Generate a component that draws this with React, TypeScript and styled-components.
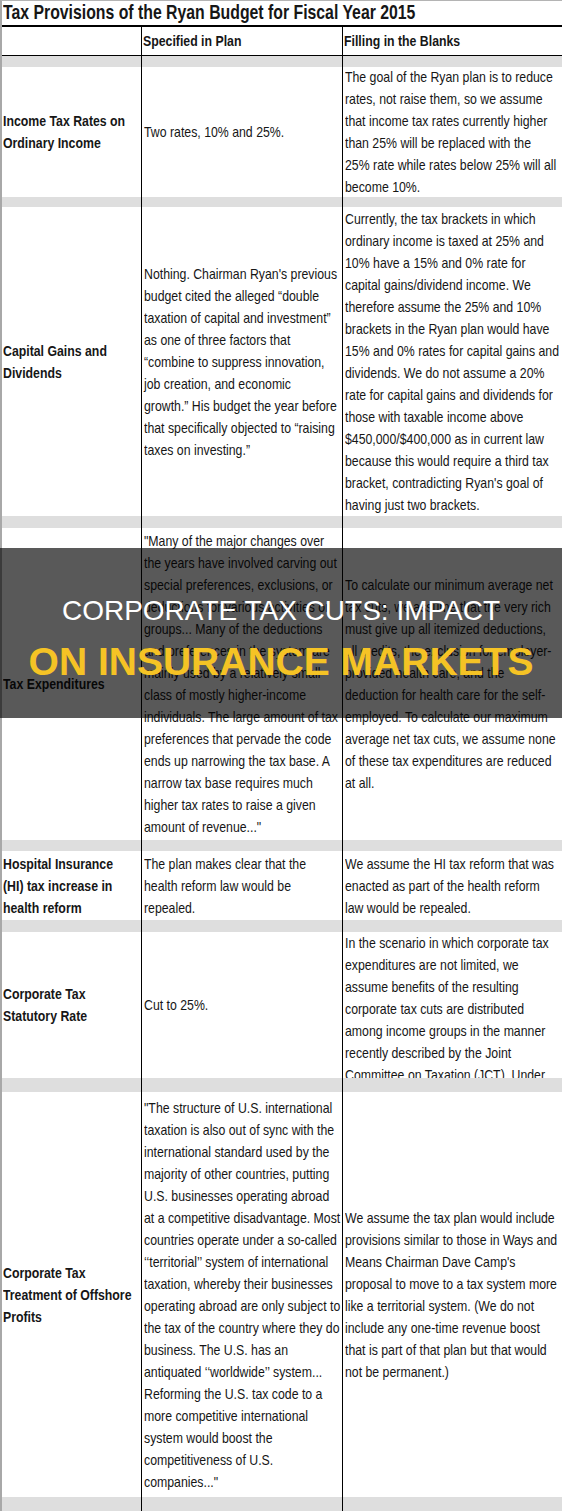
import { FC } from 'react';
import styled, { createGlobalStyle } from 'styled-components';

const GlobalStyle = createGlobalStyle`
  html, body {
    margin: 0;
    padding: 0;
    background: #ffffff;
  }
`;

const Page = styled.div`
  position: relative;
  width: 562px;
  height: 1511px;
  overflow: hidden;
  background: #ffffff;
`;

// the sheet is set in a narrow face; no narrow font is installed,
// so the glyphs are squeezed to the width of Arial Narrow
const NARROW = 0.82;

const Sheet = styled.div`
  display: flex;
  flex-direction: column;
  border-top: 1px solid #b4b4b4;
  border-left: 2px solid #a8a8a8;
  font-family: "Liberation Sans", Arial, sans-serif;
  color: #161616;
`;

const Title = styled.div`
  height: 24px;
  padding-left: 1px;
  font-size: 19.3px;
  font-weight: 700;
  line-height: 24px;
  border-bottom: 2px solid #000000;
`;

const Row = styled.div<{ $h: number; $gray?: boolean; $ruled?: boolean }>`
  display: grid;
  grid-template-columns: 139px 201px 1fr;
  height: ${p => p.$h}px;
  background: ${p => (p.$gray ? '#dedede' : '#ffffff')};
  border-bottom: ${p => (p.$ruled ? '1px solid #000000' : 'none')};
`;

const Cell = styled.div<{ $line?: boolean; $top?: boolean; $bold?: boolean }>`
  display: flex;
  flex-direction: column;
  justify-content: ${p => (p.$top ? 'flex-start' : 'center')};
  overflow: hidden;
  padding-left: ${p => (p.$bold ? 1 : 2)}px;
  border-left: ${p => (p.$line ? '1px solid #000000' : 'none')};
  font-size: 15px;
  font-weight: ${p => (p.$bold ? 700 : 400)};
  line-height: 22px;
`;

const Line = styled.span`
  display: block;
  white-space: nowrap;
  transform: scaleX(${NARROW});
  transform-origin: left center;
`;

const Banner = styled.div`
  position: absolute;
  top: 548px;
  left: 0;
  right: 0;
  height: 170px;
  box-sizing: border-box;
  padding-top: 46px;
  display: flex;
  flex-direction: column;
  align-items: center;
  gap: 11px;
  background: rgba(0, 0, 0, 0.65);
  font-family: "Liberation Sans", Arial, sans-serif;
  text-transform: uppercase;
`;

const BannerTop = styled.div`
  color: #ffffff;
  font-size: 28px;
  line-height: 34px;
  font-weight: 400;
  white-space: nowrap;
`;

const BannerBottom = styled.div`
  color: #f5c325;
  font-size: 39px;
  line-height: 46px;
  font-weight: 700;
  white-space: nowrap;
`;

type Entry = {
  h: number;
  label: string[];
  plan: string[];
  blanks: string[];
  blanksTop?: boolean;
};

const entries: Entry[] = [
  {
    h: 130,
    label: ['Income Tax Rates on', 'Ordinary Income'],
    plan: ['Two rates, 10% and 25%.'],
    blanks: [
      'The goal of the Ryan plan is to reduce',
      'rates, not raise them, so we assume',
      'that income tax rates currently higher',
      'than 25% will be replaced with the',
      '25% rate while rates below 25% will all',
      'become 10%.',
    ],
  },
  {
    h: 309,
    label: ['Capital Gains and', 'Dividends'],
    plan: [
      "Nothing. Chairman Ryan's previous",
      'budget cited the alleged “double',
      'taxation of capital and investment”',
      'as one of three factors that',
      '“combine to suppress innovation,',
      'job creation, and economic',
      'growth.” His budget the year before',
      'that specifically objected to “raising',
      'taxes on investing.”',
    ],
    blanks: [
      'Currently, the tax brackets in which',
      'ordinary income is taxed at 25% and',
      '10% have a 15% and 0% rate for',
      'capital gains/dividend income. We',
      'therefore assume the 25% and 10%',
      'brackets in the Ryan plan would have',
      '15% and 0% rates for capital gains and',
      'dividends. We do not assume a 20%',
      'rate for capital gains and dividends for',
      'those with taxable income above',
      '$450,000/$400,000 as in current law',
      'because this would require a third tax',
      "bracket, contradicting Ryan's goal of",
      'having just two brackets.',
    ],
  },
  {
    h: 312,
    label: ['Tax Expenditures'],
    plan: [
      '"Many of the major changes over',
      'the years have involved carving out',
      'special preferences, exclusions, or',
      'deductions for various activities or',
      'groups... Many of the deductions',
      'and preferences in the system are',
      'mainly used by a relatively small',
      'class of mostly higher-income',
      'individuals. The large amount of tax',
      'preferences that pervade the code',
      'ends up narrowing the tax base. A',
      'narrow tax base requires much',
      'higher tax rates to raise a given',
      'amount of revenue..."',
    ],
    blanks: [
      'To calculate our minimum average net',
      'tax cuts, we assume that the very rich',
      'must give up all itemized deductions,',
      'all credits, the exclusion for employer-',
      'provided health care, and the',
      'deduction for health care for the self-',
      'employed. To calculate our maximum',
      'average net tax cuts, we assume none',
      'of these tax expenditures are reduced',
      'at all.',
    ],
  },
  {
    h: 69,
    label: ['Hospital Insurance', '(HI) tax increase in', 'health reform'],
    plan: ['The plan makes clear that the', 'health reform law would be', 'repealed.'],
    blanks: [
      'We assume the HI tax reform that was',
      'enacted as part of the health reform',
      'law would be repealed.',
    ],
  },
  {
    h: 146,
    label: ['Corporate Tax', 'Statutory Rate'],
    plan: ['Cut to 25%.'],
    blanks: [
      'In the scenario in which corporate tax',
      'expenditures are not limited, we',
      'assume benefits of the resulting',
      'corporate tax cuts are distributed',
      'among income groups in the manner',
      'recently described by the Joint',
      'Committee on Taxation (JCT). Under',
    ],
    blanksTop: true,
  },
  {
    h: 405,
    label: ['Corporate Tax', 'Treatment of Offshore', 'Profits'],
    plan: [
      '"The structure of U.S. international',
      'taxation is also out of sync with the',
      'international standard used by the',
      'majority of other countries, putting',
      'U.S. businesses operating abroad',
      'at a competitive disadvantage. Most',
      'countries operate under a so-called',
      '‘‘territorial’’ system of international',
      'taxation, whereby their businesses',
      'operating abroad are only subject to',
      'the tax of the country where they do',
      'business. The U.S. has an',
      'antiquated ‘‘worldwide’’ system...',
      'Reforming the U.S. tax code to a',
      'more competitive international',
      'system would boost the',
      'competitiveness of U.S.',
      'companies..."',
    ],
    blanks: [
      'We assume the tax plan would include',
      'provisions similar to those in Ways and',
      "Means Chairman Dave Camp's",
      'proposal to move to a tax system more',
      'like a territorial system. (We do not',
      'include any one-time revenue boost',
      'that is part of that plan but that would',
      'not be permanent.)',
    ],
  },
];

// gray spacer heights: before each entry, plus the last one
const gaps = [11, 10, 12, 11, 12, 14, 14];

const Lines: FC<{ lines: string[] }> = ({ lines }) => (
  <>
    {lines.map((t, i) => (
      <Line key={i}>{t}</Line>
    ))}
  </>
);

const Spacer: FC<{ h: number }> = ({ h }) => (
  <Row $h={h} $gray>
    <Cell />
    <Cell $line />
    <Cell $line />
  </Row>
);

const App: FC = () => {
  return (
    <Page>
      <GlobalStyle />
      <Sheet>
        <Title>
          <Line>Tax Provisions of the Ryan Budget for Fiscal Year 2015</Line>
        </Title>
        <Row $h={28} $ruled>
          <Cell />
          <Cell $line $bold>
            <Line>Specified in Plan</Line>
          </Cell>
          <Cell $line $bold>
            <Line>Filling in the Blanks</Line>
          </Cell>
        </Row>
        {entries.map((e, i) => (
          <div key={i}>
            <Spacer h={gaps[i]} />
            <Row $h={e.h}>
              <Cell $bold>
                <Lines lines={e.label} />
              </Cell>
              <Cell $line>
                <Lines lines={e.plan} />
              </Cell>
              <Cell $line $top={e.blanksTop}>
                <Lines lines={e.blanks} />
              </Cell>
            </Row>
          </div>
        ))}
        <Spacer h={gaps[6]} />
      </Sheet>
      <Banner>
        <BannerTop>Corporate Tax Cuts: Impact</BannerTop>
        <BannerBottom>On Insurance Markets</BannerBottom>
      </Banner>
    </Page>
  );
};

export default App;
